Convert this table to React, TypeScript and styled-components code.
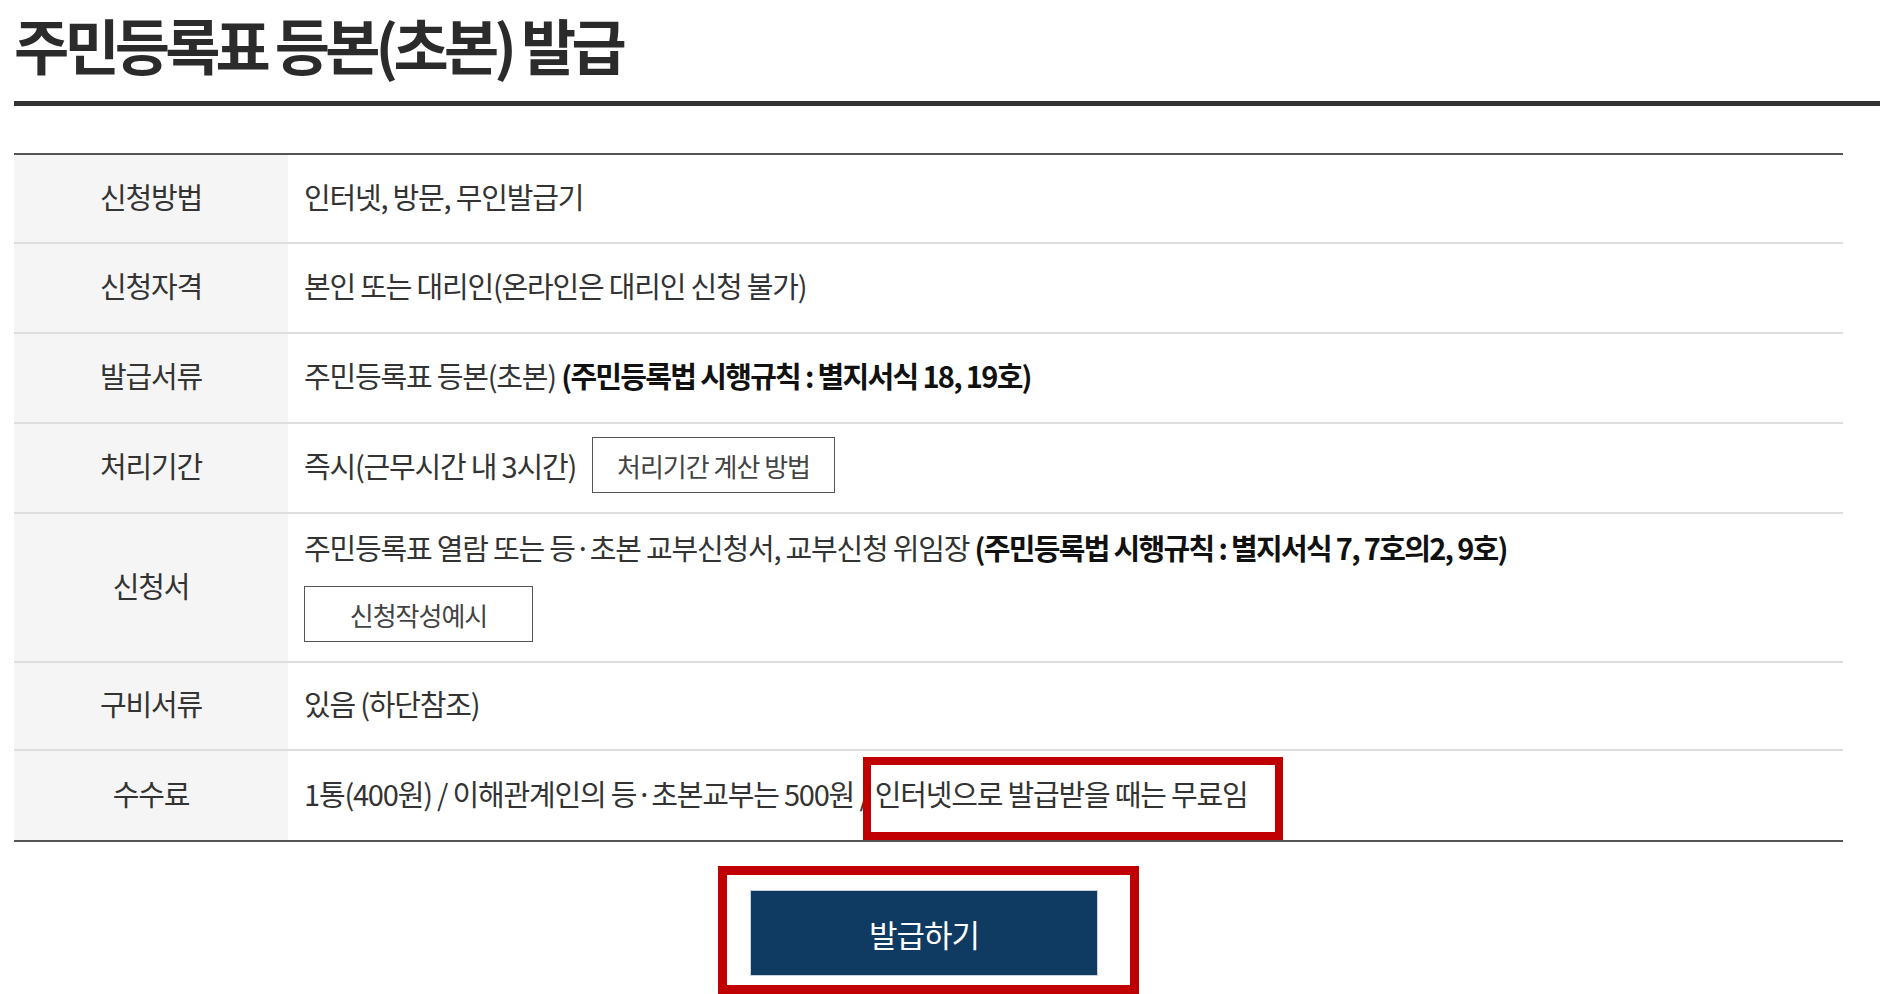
import React from 'react';
import styled, { createGlobalStyle } from 'styled-components';

const GlobalStyle = createGlobalStyle`
  html, body {
    margin: 0;
    padding: 0;
    background: #ffffff;
  }
  body {
    font-family: 'Noto Sans CJK KR', 'Noto Sans', sans-serif;
    color: #333333;
  }
`;

const Page = styled.div`
  width: 1880px;
  padding-left: 14px;
  box-sizing: border-box;
`;

const Header = styled.header`
  height: 106px;
  box-sizing: border-box;
  border-bottom: 5px solid #333333;
`;

const Title = styled.h1`
  margin: 0;
  font-size: 60px;
  line-height: 87px;
  font-weight: 700;
  letter-spacing: -4.8px;
  color: #2b2b2b;
`;

const Table = styled.div`
  width: 1829px;
  margin-top: 47px;
  border-top: 2px solid #555555;
  border-bottom: 2px solid #555555;
`;

const Row = styled.div<{ first?: boolean; h?: number }>`
  display: grid;
  grid-template-columns: 274px 1fr;
  border-top: ${(props) => (props.first ? 'none' : '2px solid #dedede')};

  & > div {
    min-height: ${(props) => props.h ?? 88}px;
  }
`;

const Th = styled.div`
  display: flex;
  align-items: center;
  justify-content: center;
  padding-bottom: 6px;
  box-sizing: border-box;
  background: #f5f5f5;
  font-size: 29px;
  line-height: 40px;
  letter-spacing: -1.2px;
  color: #333333;
`;

const Td = styled.div<{ stack?: boolean }>`
  display: flex;
  flex-direction: ${(props) => (props.stack ? 'column' : 'row')};
  align-items: ${(props) => (props.stack ? 'flex-start' : 'center')};
  justify-content: ${(props) => (props.stack ? 'center' : 'flex-start')};
  padding: 13px 16px 19px;
  box-sizing: border-box;
  font-size: 29px;
  line-height: 40px;
  letter-spacing: -1.2px;
  color: #333333;
`;

const Line = styled.p`
  margin: 0;
`;

const Strong = styled.b`
  font-weight: 700;
  letter-spacing: -1.7px;
  color: #111111;
`;

const OutlineButton = styled.button<{ inline?: boolean; wide?: boolean }>`
  height: 56px;
  min-width: ${(props) => (props.wide ? '229px' : '0')};
  margin-left: ${(props) => (props.inline ? '16px' : '0')};
  margin-top: ${(props) => (props.inline ? '0' : '19px')};
  padding: 0 24px;
  background: #ffffff;
  border: 1px solid #555555;
  font-family: inherit;
  font-size: 26px;
  letter-spacing: -1px;
  color: #444444;
`;

const Highlight = styled.span`
  position: relative;
  display: inline-block;

  &::after {
    content: '';
    position: absolute;
    top: -16px;
    left: -12px;
    right: -36px;
    bottom: -27px;
    border: 8px solid #c00000;
    pointer-events: none;
  }
`;

const ActionBar = styled.div`
  display: flex;
  justify-content: center;
  width: 1829px;
  margin-top: 24px;
`;

const ButtonFrame = styled.div`
  display: flex;
  padding: 15px 32px 9px 23px;
  border: 9px solid #c00000;
`;

const IssueButton = styled.button`
  display: block;
  width: 348px;
  height: 86px;
  background: #0f3a62;
  border: 1px solid #c9d1da;
  color: #ffffff;
  font-family: inherit;
  font-size: 31px;
  letter-spacing: -1px;
`;

const App = () => {
  return (
    <Page>
      <GlobalStyle />
      <Header>
        <Title>주민등록표 등본(초본) 발급</Title>
      </Header>
      <Table>
        <Row first h={87}>
          <Th>신청방법</Th>
          <Td>인터넷, 방문, 무인발급기</Td>
        </Row>
        <Row>
          <Th>신청자격</Th>
          <Td>본인 또는 대리인(온라인은 대리인 신청 불가)</Td>
        </Row>
        <Row>
          <Th>발급서류</Th>
          <Td>
            <Line>
              주민등록표 등본(초본) <Strong>(주민등록법 시행규칙 : 별지서식 18, 19호)</Strong>
            </Line>
          </Td>
        </Row>
        <Row>
          <Th>처리기간</Th>
          <Td>
            <Line>즉시(근무시간 내 3시간)</Line>
            <OutlineButton inline>처리기간 계산 방법</OutlineButton>
          </Td>
        </Row>
        <Row>
          <Th>신청서</Th>
          <Td stack>
            <Line>
              주민등록표 열람 또는 등·초본 교부신청서, 교부신청 위임장{' '}
              <Strong>(주민등록법 시행규칙 : 별지서식 7, 7호의2, 9호)</Strong>
            </Line>
            <OutlineButton wide>신청작성예시</OutlineButton>
          </Td>
        </Row>
        <Row h={86}>
          <Th>구비서류</Th>
          <Td>있음 (하단참조)</Td>
        </Row>
        <Row h={89}>
          <Th>수수료</Th>
          <Td>
            <Line>
              1통(400원) / 이해관계인의 등·초본교부는 500원 /{' '}
              <Highlight>인터넷으로 발급받을 때는 무료임</Highlight>
            </Line>
          </Td>
        </Row>
      </Table>
      <ActionBar>
        <ButtonFrame>
          <IssueButton>발급하기</IssueButton>
        </ButtonFrame>
      </ActionBar>
    </Page>
  );
};

export default App;
